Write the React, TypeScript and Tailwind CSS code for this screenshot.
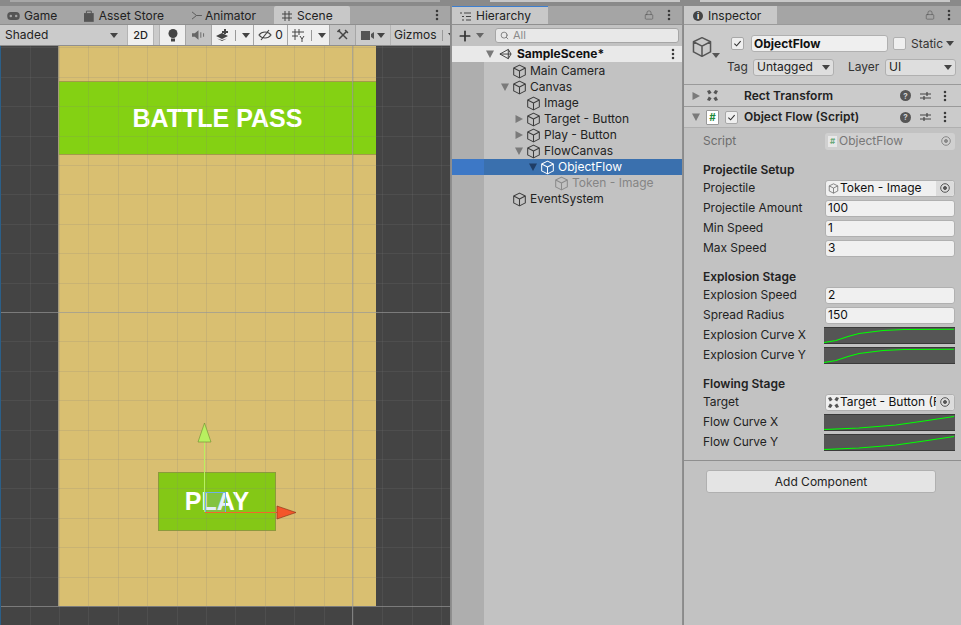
import { Lock, MoreVertical, Plus, Search } from 'lucide-react'

const font = "font-['Inter','Noto_Sans',sans-serif]"

function Cube({ className = 'w-[15px] h-[15px] text-[#3c3c3c]' }: { className?: string }) {
  return (
    <svg viewBox="0 0 16 16" fill="none" stroke="currentColor" strokeWidth="1.1" className={className}>
      <path d="M8 1.2 14.2 4.2V11.6L8 14.8 1.8 11.6V4.2Z M1.8 4.2 8 7.4 14.2 4.2 M8 7.4V14.8" strokeLinejoin="round" />
    </svg>
  )
}

function Caret({ className = 'text-[#444]' }: { className?: string }) {
  return (
    <svg viewBox="0 0 8 5" className={`w-[8px] h-[5px] shrink-0 ${className}`} fill="currentColor">
      <path d="M0 0H8L4 5Z" />
    </svg>
  )
}

function Fold({ open, className = 'text-[#7a7a7a]' }: { open: boolean; className?: string }) {
  return (
    <svg viewBox="0 0 10 10" className={`w-[10px] h-[10px] ${className}`} fill="currentColor">
      {open ? <path d="M1 1.5H9L5 9Z" /> : <path d="M1.5 1V9L9 5Z" />}
    </svg>
  )
}

function Dots() {
  return <MoreVertical className="w-[14px] h-[14px] text-[#3a3a3a]" strokeWidth={2.4} />
}

function Check() {
  return (
    <span className="w-[13px] h-[13px] rounded-[2px] bg-[#efefef] border border-[#a8a8a8] flex items-center justify-center">
      <svg viewBox="0 0 10 10" className="w-[9px] h-[9px]" fill="none" stroke="#333" strokeWidth="1.2">
        <path d="M1.5 5.2 4 7.6 8.5 2.4" />
      </svg>
    </span>
  )
}

function Tab({ label, icon, active, className = '' }: { label: string; icon: React.ReactNode; active?: boolean; className?: string }) {
  return (
    <div className={`h-[18px] pt-[1px] flex items-center text-[12px] text-[#222] whitespace-nowrap shrink-0 ${active ? 'bg-[#c8c8c8] rounded-t-[2px]' : ''} ${className}`}>
      {icon}
      <span>{label}</span>
    </div>
  )
}

function ToolBtn({ w, on, children }: { w: string; on?: boolean; children: React.ReactNode }) {
  return (
    <div className={`${w} h-[20px] flex items-center justify-center gap-[3px] shrink-0 border-r border-[#a6a6a6] ${on ? 'bg-[#efefef]' : 'bg-[#c4c4c4]'}`}>
      {children}
    </div>
  )
}

function SceneView() {
  const xs = Array.from({ length: 16 }, (_, i) => Math.round(28.6 + i * 29.4) + 0.5)
  const ys = Array.from({ length: 20 }, (_, i) => Math.round(1.4 + i * 29.4) + 0.5)
  return (
    <div className="relative flex-1 bg-[#444444] overflow-hidden border-l border-[#2b5f88]">
      {/* the game canvas, placed on the free scene view */}
      <div className="absolute left-[57px] top-0 w-[318px] h-[560px] bg-[#d9bf71] border-l border-[#a49a7c]">
        <div className="absolute left-0 right-0 top-[35px] h-[74px] pt-[2px] bg-[#84d113] border-y border-[#a39a4a] flex items-center justify-center text-white text-[25px] font-bold font-['Liberation_Sans',sans-serif]">
          BATTLE PASS
        </div>
        <div className="absolute left-[99px] top-[426px] w-[118px] h-[59px] bg-[#84c816] border border-[#8c9a3c] flex items-center justify-center text-white text-[25px] font-bold font-['Liberation_Sans',sans-serif]">
          PLAY
        </div>
      </div>
      <svg className="absolute left-0 top-0 w-[449px] h-[579px]" viewBox="0 0 449 579">
        {xs.map((x) => (
          <line key={x} x1={x} x2={x} y1="0" y2="579" stroke="#808080" strokeOpacity="0.18" />
        ))}
        {ys.map((y) => (
          <line key={y} x1="0" x2="449" y1={y} y2={y} stroke="#808080" strokeOpacity="0.18" />
        ))}
        <line x1="351.5" x2="351.5" y1="0" y2="579" stroke="#9a9a9a" strokeOpacity="0.7" />
        <line x1="0" x2="449" y1="266.5" y2="266.5" stroke="#9a9a9a" strokeOpacity="0.6" />
        <line x1="0" x2="449" y1="560.5" y2="560.5" stroke="#9a9a9a" strokeOpacity="0.6" />
        {/* move gizmo */}
        <rect x="204.500" y="446.500" width="20" height="20" fill="#7fb0d8" fillOpacity="0.22" stroke="#6fb0e8" />
        <line x1="203.5" x2="203.5" y1="392" y2="466" stroke="#b8f060" />
        <path d="M203.5 377 210 396H197Z" fill="#b8f060" stroke="#6c8c30" strokeWidth="0.6" />
        <line x1="204" x2="280" y1="466.5" y2="466.5" stroke="#f2662c" />
        <path d="M295 466.5 276 460V473Z" fill="#f4562a" stroke="#803018" strokeWidth="0.6" />
      </svg>
    </div>
  )
}

function SceneColumn() {
  return (
    <div className="w-[450px] flex flex-col shrink-0 bg-[#a5a5a5]">
      <div className="h-[18px] flex items-center">
        <Tab className="w-[75px] pl-[7px] gap-[4px]" label="Game" icon={
          <svg viewBox="0 0 14 9" className="w-[13px] h-[8px]" fill="#555"><rect width="14" height="9" rx="4" /><circle cx="4" cy="4.500" r="1.400" fill="#a5a5a5" /><circle cx="10" cy="4.500" r="1.400" fill="#a5a5a5" /></svg>
        } />
        <Tab className="w-[89px] pl-[9px] gap-[5px]" label="Asset Store" icon={
          <svg viewBox="0 0 10 12" className="w-[10px] h-[12px]" fill="#555"><path d="M0 3H10V12H0Z" /><path d="M2.5 3.500V1H7.5V3.500" fill="none" stroke="#555" /></svg>
        } />
        <Tab className="w-[110px] pl-[27px] gap-[3px]" label="Animator" icon={
          <svg viewBox="0 0 12 10" className="w-[11px] h-[9px]" fill="none" stroke="#555"><path d="M1 1 6 5 1 9M6 5H12" /></svg>
        } />
        <Tab active className="w-[76px] pl-[8px] gap-[5px]" label="Scene" icon={
          <svg viewBox="0 0 10 10" className="w-[10px] h-[10px]" fill="none" stroke="#444"><path d="M3 0V10M7 0V10M0 3H10M0 7H10" /></svg>
        } />
        <div className="flex-1" />
        <div className="pr-[6px] flex"><Dots /></div>
      </div>
      <div className="h-[1px] bg-[#8f8f8f]" />
      <div className="h-[20px] bg-[#cbcbcb] flex items-center text-[12px] text-[#222] overflow-hidden">
        <div className="w-[121px] pl-[5px] pr-[3px] flex items-center justify-between shrink-0">Shaded<Caret /></div>
        <div className="w-[7px] shrink-0 border-r border-[#b4b4b4] h-[20px]" />
        <div className="w-[25px] h-[20px] bg-[#efefef] flex items-center justify-center text-[11px] font-medium shrink-0">2D</div>
        <div className="w-[7px] shrink-0 border-x border-[#b4b4b4] h-[20px]" />
        <ToolBtn w="w-[26px]" on>
          <svg viewBox="0 0 10 13" className="w-[10px] h-[13px]" fill="#444"><circle cx="5" cy="4.5" r="4.5" /><rect x="3" y="9.5" width="4" height="3" /></svg>
        </ToolBtn>
        <ToolBtn w="w-[26px]">
          <svg viewBox="0 0 14 10" className="w-[13px] h-[10px]" fill="#666"><path d="M0 3H3L7 0V10L3 7H0Z M9 2H10V8H9Z M12 3H13V7H12Z" /></svg>
        </ToolBtn>
        <ToolBtn w="w-[42px]" on>
          <svg viewBox="0 0 13 12" className="w-[13px] h-[12px]" fill="#444"><path d="M0 7 6 4 12 7 6 10Z M1 9.5 6 12 11 9.5 6 11Z M8 0H10V2H12V4H10V5H8V4H6V2H8Z" /></svg>
          <span className="w-px h-[11px] bg-[#999] mx-[3px]" /><Caret />
        </ToolBtn>
        <ToolBtn w="w-[34px]" on>
          <svg viewBox="0 0 14 12" className="w-[14px] h-[12px]" fill="none" stroke="#444" strokeWidth="1.2"><path d="M1 6C4 2 10 2 13 6 10 10 4 10 1 6Z M3 11 11 1" /></svg>
          <span className="text-[12px]">0</span>
        </ToolBtn>
        <ToolBtn w="w-[42px]" on>
          <svg viewBox="0 0 13 13" className="w-[13px] h-[13px]" fill="none" stroke="#444"><path d="M3 0V11M7 0V6M0 3H12M0 7H6M8 7 10 10 12 7M10 10V13" /></svg>
          <span className="w-px h-[11px] bg-[#999] mx-[3px]" /><Caret />
        </ToolBtn>
        <ToolBtn w="w-[26px]">
          <svg viewBox="0 0 12 12" className="w-[12px] h-[12px]" fill="none" stroke="#444"><path d="M2 10 10 2" strokeWidth="1.600" /><path d="M8 1 11 4" strokeWidth="1.200" /><path d="M2 2 10 10" strokeWidth="1.400" /><path d="M0.500 3 3 0.500" strokeWidth="1.600" /></svg>
        </ToolBtn>
        <div className="w-[35px] h-[20px] flex items-center justify-center gap-[3px] shrink-0 border-r border-[#b4b4b4]">
          <svg viewBox="0 0 13 9" className="w-[13px] h-[9px]" fill="#555"><path d="M0 0H9V9H0Z M10 3 13 1V8L10 6Z" /></svg>
          <Caret />
        </div>
        <div className="pl-[3px] flex items-center gap-[5px] shrink-0">Gizmos<span className="w-px h-[11px] bg-[#999]" /><Caret /></div>
      </div>
      <div className="h-[1px] bg-[#8f8f8f]" />
      <SceneView />
    </div>
  )
}

const tree = [
  { name: 'Main Camera', indent: 'w-[14px]', fold: '' },
  { name: 'Canvas', indent: 'w-[14px]', fold: 'open' },
  { name: 'Image', indent: 'w-[28px]', fold: '' },
  { name: 'Target - Button', indent: 'w-[28px]', fold: 'closed' },
  { name: 'Play - Button', indent: 'w-[28px]', fold: 'closed' },
  { name: 'FlowCanvas', indent: 'w-[28px]', fold: 'open' },
  { name: 'ObjectFlow', indent: 'w-[42px]', fold: 'open', selected: true },
  { name: 'Token - Image', indent: 'w-[56px]', fold: '', muted: true },
  { name: 'EventSystem', indent: 'w-[14px]', fold: '' },
]

function Hierarchy() {
  return (
    <div className="w-[232px] ml-[1px] flex flex-col shrink-0 border-x border-[#8f8f8f] bg-[#c2c2c2]">
      <div className="h-[18px] flex items-center bg-[#a5a5a5]">
        <div className="w-[96px] h-[18px] pt-[1px] bg-[#c8c8c8] border-t border-[#3d7fd0] flex items-center gap-[5px] pl-[8px] text-[12px] text-[#222]">
          <svg viewBox="0 0 11 9" className="w-[11px] h-[9px]" fill="none" stroke="#444"><path d="M0 1H2M4 1H11M2 4.500H4M6 4.500H11M2 8H4M6 8H11" /></svg>
          Hierarchy
        </div>
        <div className="flex-1" />
        <Lock className="w-[10px] h-[12px] text-[#555] mr-[8px]" strokeWidth={1.4} />
        <div className="pr-[6px] flex"><Dots /></div>
      </div>
      <div className="h-[22px] flex items-center border-t border-[#8f8f8f]">
        <Plus className="w-[16px] h-[16px] ml-[5px] text-[#333]" strokeWidth={2.6} />
        <span className="ml-[3px]"><Caret className="text-[#666]" /></span>
        <div className="ml-[11px] w-[184px] h-[15px] rounded-[3px] bg-[#e8e8e8] border border-[#a6a6a6] flex items-center pl-[4px] gap-[4px] text-[11px] text-[#8a8a8a]">
          <Search className="w-[9px] h-[9px] text-[#666]" strokeWidth={2} />
          All
        </div>
      </div>
      <div className="flex-1 flex flex-col relative bg-[linear-gradient(90deg,#aeaeae_32px,#c2c2c2_32px)]">
        <div className="h-[16px] flex items-center bg-[#e9e9e9] mb-[1px]">
          <span className="ml-[33px]"><Fold open /></span>
          <svg viewBox="0 0 14 13" className="ml-[4px] w-[13px] h-[13px]" fill="none" stroke="#3a3a3a"><path d="M1 6 10 1 13 6 10 11ZM1 6H13M10 1V11" /></svg>
          <span className="ml-[5px] text-[12px] font-bold text-[#111]">SampleScene*</span>
          <div className="flex-1" />
          <div className="pr-[2px] flex"><Dots /></div>
        </div>
        {tree.map((row) => (
          <div key={row.name} className={`h-[16px] flex items-center text-[12px] ${row.selected ? 'bg-[linear-gradient(90deg,#3d78c6_32px,#3a70ae_32px)] text-white' : row.muted ? 'text-[#858585]' : 'text-[#222]'}`}>
            <div className="w-[32px] shrink-0" />
            <div className={`${row.indent} shrink-0`} />
            <div className="w-[14px] shrink-0 flex justify-center">
              {row.fold && <Fold open={row.fold === 'open'} className={row.selected ? 'text-[#1f3d66]' : 'text-[#7a7a7a]'} />}
            </div>
            <Cube className={`w-[15px] h-[15px] ${row.selected ? 'text-white' : row.muted ? 'text-[#8a8a8a]' : 'text-[#3c3c3c]'}`} />
            <span className="ml-[3px]">{row.name}</span>
          </div>
        ))}
      </div>
    </div>
  )
}

function Label({ children, muted }: { children: React.ReactNode; muted?: boolean }) {
  return <span className={`w-[122px] shrink-0 tracking-[-0.05px] ${muted ? 'text-[#6d6d6d]' : 'text-[#222]'}`}>{children}</span>
}

function NumRow({ label, value }: { label: string; value: string }) {
  return (
    <div className="h-[20px] flex items-center pl-[19px] text-[12px]">
      <Label>{label}</Label>
      <div className="w-[130px] h-[17px] rounded-[3px] bg-[#f0f0f0] border border-[#b0b0b0] flex items-center pl-[2px] text-[#111]">{value}</div>
    </div>
  )
}

function RefRow({ label, value, icon }: { label: string; value: string; icon: React.ReactNode }) {
  return (
    <div className="h-[20px] flex items-center pl-[19px] text-[12px]">
      <Label>{label}</Label>
      <div className="w-[130px] h-[17px] rounded-[3px] bg-[#f0f0f0] border border-[#b0b0b0] flex items-center text-[#111]">
        <span className="pl-[2px] shrink-0">{icon}</span>
        <span className="w-[97px] shrink-0 whitespace-nowrap pl-[1px]">{value}</span>
        <span className="w-[18px] h-full bg-[#dcdcdc] flex items-center justify-center shrink-0 rounded-r-[3px]">
          <svg viewBox="0 0 10 10" className="w-[10px] h-[10px]" fill="none" stroke="#555"><circle cx="5" cy="5" r="4.300" /><circle cx="5" cy="5" r="1.500" fill="#555" /></svg>
        </span>
      </div>
    </div>
  )
}

function CurveRow({ label, fast }: { label: string; fast?: boolean }) {
  const pts = fast ? '0,14.500 12,12.500 24,8.500 35,5.500 59,2.500 80,1.500 130,1.200' : '0,14.500 35,13 72,10 100,6 130,1.500'
  return (
    <div className="h-[20px] flex items-center pl-[19px] text-[12px]">
      <Label>{label}</Label>
      <div className="-ml-[1px] w-[131px] h-[17px] bg-[#555555] border-y border-[#3a3a3a]">
        <svg viewBox="0 0 131 15" className="w-[131px] h-[15px]" fill="none" stroke="#00ff00" strokeWidth="1.1">
          <polyline points={pts} />
        </svg>
      </div>
    </div>
  )
}

function SectionHead({ children, className = '' }: { children: React.ReactNode; className?: string }) {
  return <div className={`h-[16px] flex items-center pl-[19px] text-[12px] font-semibold text-[#222] ${className}`}>{children}</div>
}

function TargetIcon() {
  return (
    <svg viewBox="0 0 12 12" className="w-[11px] h-[11px]" fill="#555"><path d="M0 1 3 0 5 3 2 5ZM12 1 9 0 7 3 10 5ZM0 11 3 12 5 9 2 7ZM12 11 9 12 7 9 10 7Z" /></svg>
  )
}

function HeaderTools() {
  return (
    <div className="ml-auto flex items-center pr-[9px]">
      <span className="w-[11px] h-[11px] rounded-full bg-[#555] text-[#d0d0d0] text-[8px] font-bold flex items-center justify-center">?</span>
      <svg viewBox="0 0 11 10" className="ml-[9px] w-[11px] h-[10px]" fill="none" stroke="#444" strokeWidth="1.2"><path d="M0 3H11M0 7H11M7 1V5M4 5V9" /></svg>
      <span className="ml-[7px] flex"><Dots /></span>
    </div>
  )
}

function Inspector() {
  return (
    <div className="flex-1 ml-[1px] flex flex-col bg-[#c2c2c2]">
      <div className="h-[18px] flex items-center bg-[#a5a5a5]">
        <div className="w-[93px] h-[18px] pt-[1px] bg-[#c8c8c8] flex items-center gap-[5px] pl-[9px] text-[12px] text-[#222]">
          <span className="w-[10px] h-[10px] rounded-full bg-[#444] text-white text-[8px] font-bold flex items-center justify-center">i</span>
          Inspector
        </div>
        <div className="flex-1" />
        <Lock className="w-[10px] h-[12px] text-[#555] mr-[7px]" strokeWidth={1.4} />
        <div className="pr-[5px] flex"><Dots /></div>
      </div>
      <div className="h-[61px] bg-[#cbcbcb] border-y border-[#9a9a9a] relative shrink-0">
        <div className="flex items-center h-[27px] pt-[10px]">
          <div className="w-[47px] shrink-0" />
          <Check />
          <div className="ml-[7px] w-[137px] h-[17px] rounded-[3px] bg-[#efefef] border border-[#b0b0b0] flex items-center pl-[2px] text-[12px] font-bold text-[#111]">ObjectFlow</div>
          <span className="ml-[5px] w-[13px] h-[13px] rounded-[2px] bg-[#efefef] border border-[#b0b0b0]" />
          <span className="ml-[5px] text-[12px] text-[#333]">Static</span>
          <span className="ml-[3px]"><Caret /></span>
        </div>
        <div className="flex items-center h-[30px] text-[12px] text-[#333]">
          <span className="ml-[43px] w-[26px]">Tag</span>
          <div className="w-[81px] h-[17px] rounded-[3px] bg-[#dedede] border border-[#b0b0b0] flex items-center justify-between px-[3px] text-[#222]">Untagged<Caret /></div>
          <span className="ml-[14px] w-[37px]">Layer</span>
          <div className="w-[71px] h-[17px] rounded-[3px] bg-[#dedede] border border-[#b0b0b0] flex items-center justify-between px-[3px] text-[#222]">UI<Caret /></div>
        </div>
        <div className="absolute left-[7px] top-[11px] flex items-end">
          <Cube className="w-[22px] h-[22px] text-[#555]" />
          <span className="-ml-[1px]"><Caret className="text-[#555]" /></span>
        </div>
      </div>
      <div className="h-[22px] bg-[#cbcbcb] border-b border-[#9a9a9a] flex items-center text-[12px] font-semibold text-[#222] shrink-0">
        <span className="ml-[7px]"><Fold open={false} /></span>
        <span className="ml-[6px] w-[12px]"><TargetIcon /></span>
        <span className="ml-[25px]">Rect Transform</span>
        <HeaderTools />
      </div>
      <div className="h-[21px] bg-[#cbcbcb] border-b border-[#b0b0b0] flex items-center text-[12px] font-semibold text-[#222] shrink-0">
        <span className="ml-[7px]"><Fold open /></span>
        <span className="ml-[5px] w-[13px] h-[15px] bg-white border border-[#999] rounded-[1px] flex items-center justify-center text-[10px] font-bold text-[#1e8a3c]">#</span>
        <span className="ml-[6px]"><Check /></span>
        <span className="ml-[6px]">Object Flow (Script)</span>
        <HeaderTools />
      </div>
      <div className="h-[26px] flex items-center pl-[19px] text-[12px] shrink-0">
        <Label muted>Script</Label>
        <div className="w-[130px] h-[17px] rounded-[3px] bg-[#d0d0d0] flex items-center overflow-hidden text-[#777]">
          <span className="ml-[3px] w-[9px] h-[11px] bg-[#e8e8e8] text-[8px] font-bold text-[#6aa87a] flex items-center justify-center">#</span>
          <span className="flex-1 pl-[2px]">ObjectFlow</span>
          <svg viewBox="0 0 10 10" className="w-[10px] h-[10px] mr-[4px]" fill="none" stroke="#888"><circle cx="5" cy="5" r="4.300" /><circle cx="5" cy="5" r="1.500" fill="#888" /></svg>
        </div>
      </div>
      <SectionHead className="mt-[8px]">Projectile Setup</SectionHead>
      <RefRow label="Projectile" value="Token - Image" icon={<Cube className="w-[11px] h-[11px] text-[#666]" />} />
      <NumRow label="Projectile Amount" value="100" />
      <NumRow label="Min Speed" value="1" />
      <NumRow label="Max Speed" value="3" />
      <SectionHead className="mt-[11px]">Explosion Stage</SectionHead>
      <NumRow label="Explosion Speed" value="2" />
      <NumRow label="Spread Radius" value="150" />
      <CurveRow label="Explosion Curve X" fast />
      <CurveRow label="Explosion Curve Y" fast />
      <SectionHead className="mt-[11px]">Flowing Stage</SectionHead>
      <RefRow label="Target" value="Target - Button (R" icon={<TargetIcon />} />
      <CurveRow label="Flow Curve X" />
      <CurveRow label="Flow Curve Y" />
      <div className="mt-[8px] border-t border-[#8f8f8f] pt-[9px] pl-[22px]">
        <div className="w-[230px] h-[23px] rounded-[3px] bg-[#e4e4e4] border border-[#b0b0b0] flex items-center justify-center text-[12px] text-[#222]">Add Component</div>
      </div>
    </div>
  )
}

export default function App() {
  return (
    <div className={`w-[961px] h-[625px] overflow-hidden flex flex-col bg-[#8a8a8a] ${font}`}>
      <div className="h-[6px] shrink-0 flex items-start">
        <div className="ml-[10px] w-[430px] h-[2px] bg-[#a8a8a8]" />
        <div className="ml-[50px] w-[190px] h-[2px] bg-[#c8c8c8]" />
        <div className="ml-[20px] w-[250px] h-[2px] bg-[#c8c8c8]" />
      </div>
      <div className="flex-1 flex min-h-0">
        <SceneColumn />
        <Hierarchy />
        <Inspector />
      </div>
    </div>
  )
}
